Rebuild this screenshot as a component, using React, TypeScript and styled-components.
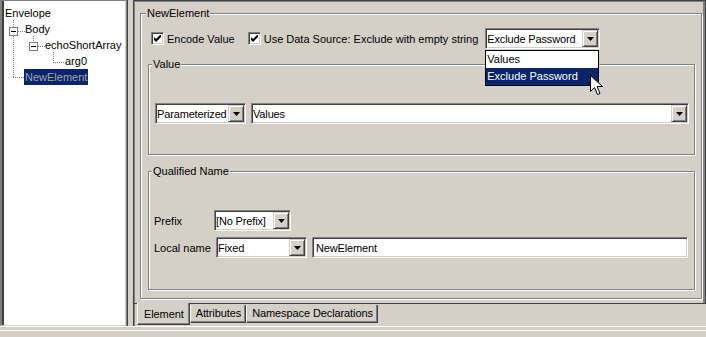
import React from "react";
import styled, { createGlobalStyle } from "styled-components";

const GlobalStyle = createGlobalStyle`
  html, body {
    margin: 0;
    padding: 0;
    background: #d4d0c8;
  }
  body {
    font-family: "Liberation Sans", Arial, sans-serif;
    font-size: 11px;
    color: #000;
  }
`;

const Frame = styled.div`
  position: relative;
  width: 706px;
  height: 337px;
  display: flex;
  flex-direction: column;
  background: #d4d0c8;
  overflow: hidden;
`;

const Split = styled.div`
  display: flex;
  height: 326px;
`;

/* ---------- tree ---------- */

const TreePane = styled.div`
  position: relative;
  width: 126px;
  box-sizing: border-box;
  background: #fff;
  border-left: 2px solid #808080;
  border-top: 1px solid #808080;
  border-right: 1px solid #d4d0c8;
  border-bottom: 1px solid #d4d0c8;
  box-shadow: inset 2px 0 0 #404040;
  padding-top: 4px;
`;

const TreeRow = styled.div<{ $indent: number }>`
  height: 16px;
  line-height: 16px;
  padding-left: ${(p) => p.$indent}px;
  white-space: nowrap;
`;

const TreeLabel = styled.span<{ $selected?: boolean }>`
  display: inline-block;
  padding: 0 1px;
  background: ${(p) => (p.$selected ? "#0a246a" : "transparent")};
  color: ${(p) => (p.$selected ? "#a2a4ac" : "#000")};
`;

const Connectors = styled.svg`
  position: absolute;
  left: -2px;
  top: -1px;
  pointer-events: none;
`;

const Divider = styled.div`
  width: 7px;
  border-left: 1px solid #808080;
  box-shadow: inset 1px 0 0 #404040;
  box-sizing: border-box;
`;

/* ---------- right side ---------- */

const EditorPane = styled.div`
  flex: 1;
  display: flex;
  flex-direction: column;
  border-left: 1px solid #404040;
  box-shadow: inset 1px 0 0 #808080;
`;

const TabBody = styled.div`
  height: 304px;
  box-sizing: border-box;
  border-top: 1px solid #404040;
  border-right: 1px solid #404040;
  border-bottom: 1px solid #404040;
  box-shadow: inset 0 1px 0 #808080, inset -2px 0 0 #808080;
  padding: 6px 3px 0 6px;
`;

const Group = styled.fieldset<{ $height: number; $gap?: number }>`
  box-sizing: border-box;
  height: ${(p) => p.$height}px;
  margin: ${(p) => p.$gap ?? 0}px 0 0 0;
  padding: 0;
  min-width: 0;
  border: 1px solid #808080;
  box-shadow: inset 1px 1px 0 #fff, 1px 1px 0 #fff;
`;

const Legend = styled.legend<{ $offset: number }>`
  margin-left: ${(p) => p.$offset}px;
  padding: 0 1px;
  line-height: 13px;
  background: #d4d0c8;
`;

const GroupBody = styled.div<{ $pad: string }>`
  padding: ${(p) => p.$pad};
  display: flex;
  flex-direction: column;
`;

const CheckRow = styled.div`
  display: flex;
  align-items: center;
  height: 21px;
  margin: 8px 0 0 3px;
`;

const CheckItem = styled.label`
  display: flex;
  align-items: center;
  gap: 3px;
  margin-right: 13px;
  white-space: nowrap;
`;

const CheckBox = styled.span`
  width: 13px;
  height: 13px;
  box-sizing: border-box;
  background: #fff;
  border: 1px solid;
  border-color: #808080 #fff #fff #808080;
  box-shadow: inset 1px 1px 0 #404040, inset -1px -1px 0 #d4d0c8;
  display: flex;
  align-items: center;
  justify-content: center;
`;

const ComboWrap = styled.div`
  position: relative;
  margin-left: -6px;
`;

const Combo = styled.div<{ $width?: number }>`
  display: flex;
  align-items: center;
  box-sizing: border-box;
  height: 21px;
  width: ${(p) => (p.$width ? `${p.$width}px` : "auto")};
  flex: ${(p) => (p.$width ? "none" : "1")};
  background: #fff;
  border: 1px solid;
  border-color: #808080 #fff #fff #808080;
  box-shadow: inset 1px 1px 0 #404040, inset -1px -1px 0 #d4d0c8;
  padding: 2px 1px 2px 1px;
`;

const ComboText = styled.span`
  flex: 1;
  min-width: 0;
  letter-spacing: -0.15px;
  white-space: nowrap;
  overflow: hidden;
`;

const ArrowButton = styled.span`
  width: 16px;
  height: 17px;
  box-sizing: border-box;
  flex: none;
  background: #d4d0c8;
  border: 1px solid;
  border-color: #d4d0c8 #404040 #404040 #d4d0c8;
  box-shadow: inset 1px 1px 0 #fff, inset -1px -1px 0 #808080;
  display: flex;
  align-items: center;
  justify-content: center;
`;

const TextField = styled(Combo)`
  padding-left: 3px;
`;

const DropList = styled.ul`
  position: absolute;
  left: 0;
  top: 22px;
  width: 114px;
  margin: 0;
  padding: 0;
  list-style: none;
  background: #fff;
  border: 1px solid #000;
  box-sizing: border-box;
  z-index: 2;
`;

const DropItem = styled.li<{ $active?: boolean }>`
  height: 17px;
  line-height: 17px;
  padding-left: 1px;
  background: ${(p) => (p.$active ? "#0a246a" : "#fff")};
  color: ${(p) => (p.$active ? "#fff" : "#000")};
`;

const FieldRow = styled.div<{ $top?: number }>`
  display: flex;
  align-items: center;
  gap: 5px;
  margin-top: ${(p) => p.$top ?? 0}px;
`;

const FieldLabel = styled.span<{ $width: number }>`
  width: ${(p) => p.$width}px;
  flex: none;
  white-space: nowrap;
`;

const TabStrip = styled.div`
  display: flex;
  align-items: flex-start;
  padding-left: 3px;
`;

const Tab = styled.div<{ $selected?: boolean }>`
  box-sizing: border-box;
  height: ${(p) => (p.$selected ? 22 : 18)}px;
  margin-top: ${(p) => (p.$selected ? -1 : 1)}px;
  padding: ${(p) => (p.$selected ? "2px 5px 0 6px" : "0 4px 0 5px")};
  line-height: ${(p) => (p.$selected ? 19 : 17)}px;
  background: #d4d0c8;
  border-left: 1px solid #fff;
  border-right: 1px solid #404040;
  border-bottom: 1px solid #404040;
  box-shadow: inset -1px -1px 0 #808080;
  white-space: nowrap;
  letter-spacing: -0.1px;
  z-index: ${(p) => (p.$selected ? 1 : 0)};
`;

const BottomStrip = styled.div`
  flex: 1;
  box-shadow: inset 0 1px 0 #fff, inset 0 4px 0 #d4d0c8, inset 0 5px 0 #fff;
`;

const Cursor = styled.svg`
  position: absolute;
  left: 590px;
  top: 75px;
  z-index: 5;
`;

function Arrow() {
  return (
    <ArrowButton>
      <svg width="7" height="4" viewBox="0 0 7 4">
        <path d="M0 0h7L3.5 4z" fill="#000" />
      </svg>
    </ArrowButton>
  );
}

function Check() {
  return (
    <CheckBox>
      <svg width="7" height="7" viewBox="0 0 7 7">
        <path d="M0 2l2 2 5-5v3l-5 5-2-2z" fill="#000" />
      </svg>
    </CheckBox>
  );
}

function TreeLines() {
  const dot = { stroke: "#808080", strokeWidth: 1, strokeDasharray: "1 1" };
  return (
    <Connectors width="126" height="100">
      <line x1="13.5" y1="20" x2="13.5" y2="78" {...dot} />
      <line x1="13" y1="77.5" x2="25" y2="77.5" {...dot} />
      <line x1="18" y1="31.5" x2="25" y2="31.5" {...dot} />
      <line x1="33.5" y1="36" x2="33.5" y2="42" {...dot} />
      <line x1="38" y1="46.5" x2="45" y2="46.5" {...dot} />
      <line x1="53.5" y1="52" x2="53.5" y2="62" {...dot} />
      <line x1="53" y1="62.5" x2="64" y2="62.5" {...dot} />
      <rect x="9.5" y="27.5" width="8" height="8" fill="#fff" stroke="#808080" />
      <line x1="11" y1="31.5" x2="16" y2="31.5" stroke="#000" />
      <rect x="29.5" y="42.5" width="8" height="8" fill="#fff" stroke="#808080" />
      <line x1="31" y1="46.5" x2="36" y2="46.5" stroke="#000" />
    </Connectors>
  );
}

export default function App() {
  return (
    <Frame>
      <GlobalStyle />
      <Split>
        <TreePane>
          <TreeLines />
          <TreeRow $indent={2}>
            <TreeLabel>Envelope</TreeLabel>
          </TreeRow>
          <TreeRow $indent={22}>
            <TreeLabel>Body</TreeLabel>
          </TreeRow>
          <TreeRow $indent={42}>
            <TreeLabel>echoShortArray</TreeLabel>
          </TreeRow>
          <TreeRow $indent={62}>
            <TreeLabel>arg0</TreeLabel>
          </TreeRow>
          <TreeRow $indent={22}>
            <TreeLabel $selected>NewElement</TreeLabel>
          </TreeRow>
        </TreePane>
        <Divider />
        <EditorPane>
          <TabBody>
            <Group $height={292}>
              <Legend $offset={5}>NewElement</Legend>
              <GroupBody $pad="0 6px 0 7px">
                <CheckRow>
                  <CheckItem>
                    <Check />
                    Encode Value
                  </CheckItem>
                  <CheckItem>
                    <Check />
                    Use Data Source: Exclude with empty string
                  </CheckItem>
                  <ComboWrap>
                    <Combo $width={115}>
                      <ComboText>Exclude Password</ComboText>
                      <Arrow />
                    </Combo>
                    <DropList>
                      <DropItem>Values</DropItem>
                      <DropItem $active>Exclude Password</DropItem>
                    </DropList>
                  </ComboWrap>
                </CheckRow>

                <Group $height={97} $gap={9}>
                  <Legend $offset={3}>Value</Legend>
                  <GroupBody $pad="32px 5px 0 6px">
                    <FieldRow>
                      <Combo $width={91}>
                        <ComboText>Parameterized</ComboText>
                        <Arrow />
                      </Combo>
                      <Combo>
                        <ComboText>Values</ComboText>
                        <Arrow />
                      </Combo>
                    </FieldRow>
                  </GroupBody>
                </Group>

                <Group $height={125} $gap={10}>
                  <Legend $offset={3}>Qualified Name</Legend>
                  <GroupBody $pad="32px 6px 0 5px">
                    <FieldRow>
                      <FieldLabel $width={55}>Prefix</FieldLabel>
                      <Combo $width={77}>
                        <ComboText>[No Prefix]</ComboText>
                        <Arrow />
                      </Combo>
                    </FieldRow>
                    <FieldRow $top={6}>
                      <FieldLabel $width={57}>Local name</FieldLabel>
                      <Combo $width={91}>
                        <ComboText>Fixed</ComboText>
                        <Arrow />
                      </Combo>
                      <TextField>
                        <ComboText>NewElement</ComboText>
                      </TextField>
                    </FieldRow>
                  </GroupBody>
                </Group>
              </GroupBody>
            </Group>
          </TabBody>
          <TabStrip>
            <Tab $selected>Element</Tab>
            <Tab>Attributes</Tab>
            <Tab>Namespace Declarations</Tab>
          </TabStrip>
        </EditorPane>
      </Split>
      <BottomStrip />
      <Cursor width="13" height="21" viewBox="0 0 13 21">
        <path
          d="M0.5 0.5v16l4-4 3 7 2.5-1-3-7h5.5z"
          fill="#fff"
          stroke="#000"
          strokeLinejoin="miter"
        />
      </Cursor>
    </Frame>
  );
}
